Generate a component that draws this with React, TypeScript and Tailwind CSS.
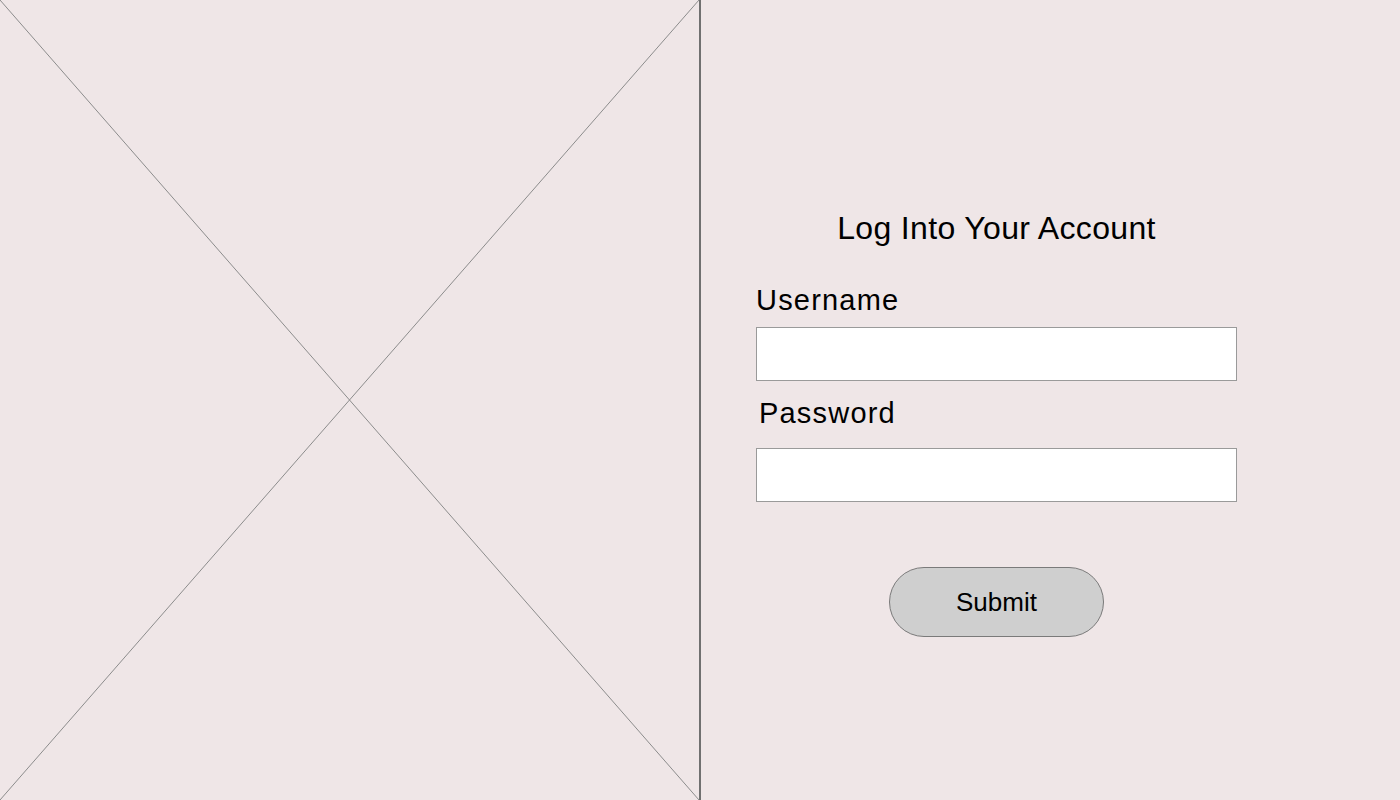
import React from 'react';

export default function App() {
  return (
    <div className="flex h-[800px] w-[1400px] bg-[#efe6e7] text-black font-['Liberation_Sans',Arial,sans-serif]">
      {/* Image placeholder */}
      <div className="h-full w-[699px]">
        <svg width="699" height="800" viewBox="0 0 699 800" preserveAspectRatio="none" className="block">
          <line x1="0" y1="0" x2="699" y2="800" stroke="#8c8c8c" strokeWidth="1" />
          <line x1="699" y1="0" x2="0" y2="800" stroke="#8c8c8c" strokeWidth="1" />
        </svg>
      </div>
      <div className="h-full w-[2px] bg-[#707070]" />

      {/* Login form */}
      <div className="flex-1 pl-[55px] pt-[212px]">
        <form className="flex w-[481px] flex-col" onSubmit={(e) => e.preventDefault()}>
          <h1 className="text-center text-[32px] leading-none font-normal tracking-[0.35px]">Log Into Your Account</h1>

          <label className="mt-[42px] text-[29px] leading-none tracking-[1.2px]">Username</label>
          <input type="text" className="mt-[12px] h-[54px] w-full border border-[#9a9a9a] bg-white outline-none" />

          <label className="ml-[3px] mt-[18px] text-[29px] leading-none tracking-[1.2px]">Password</label>
          <input type="password" className="mt-[20px] h-[54px] w-full border border-[#9a9a9a] bg-white outline-none" />

          <button
            type="submit"
            className="mx-auto mt-[65px] flex h-[70px] w-[215px] items-center justify-center rounded-full border border-[#7a7a7a] bg-[#cfcfcf] text-[26px] leading-none"
          >
            Submit
          </button>
        </form>
      </div>
    </div>
  );
}
